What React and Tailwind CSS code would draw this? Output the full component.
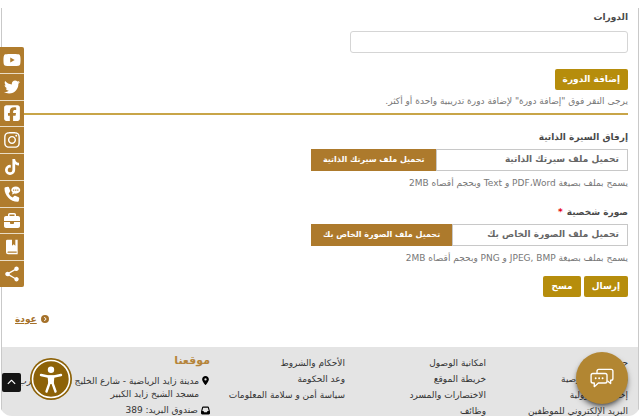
import React, { useRef, useState } from 'react';
import {
  FaYoutube, FaTwitter, FaSquareFacebook, FaInstagram, FaTiktok, FaBriefcase,
  FaLocationDot, FaInbox, FaCircleChevronRight, FaChevronUp,
} from 'react-icons/fa6';
import { MdShare } from 'react-icons/md';

function PhoneChatIcon() {
  return (
    <svg viewBox="0 0 24 24" className="size-[18px]" fill="currentColor" aria-hidden="true">
      <path d="M7.6 11.2c1.2 2.500 2.900 4.200 5.300 5.400l2-1.900c.4-.4.9-.5 1.400-.3l4.600 1.900c.6.300.9.800.8 1.400l-.6 3.300c-.1.700-.7 1.200-1.500 1.200C9.800 22 2 14.200 2 4.500c0-.8.500-1.400 1.200-1.500l3.300-.7c.6-.1 1.200.2 1.400.8l1.600 4.300c.2.500.1 1.100-.3 1.500z" />
      <path fillRule="evenodd" d="M17 2c3.300 0 6 2 6 4.800s-2.700 4.700-6 4.700c-.6 0-1.200-.1-1.700-.2L12 12.800l.8-2.900C11.700 9 11 8 11 6.800 11 4 13.700 2 17 2zm-3.500 3.900v1.600H15V5.900zm2.700 0v1.600h1.600V5.900zm2.800 0v1.600h1.500V5.900z" />
    </svg>
  );
}

function BookIcon() {
  return (
    <svg viewBox="0 0 24 24" className="size-4" fill="currentColor" aria-hidden="true">
      <path fillRule="evenodd" d="M5 1h7v9l2.500-2L17 10V1h3.500v22H6a3 3 0 0 1-3-3V3a2 2 0 0 1 2-2zm1.200 17.800a1 1 0 0 0 0 2H19v-2z" />
    </svg>
  );
}

function ChatIcon() {
  return (
    <svg viewBox="0 0 26 22" className="h-5 w-6" fill="none" stroke="currentColor" strokeWidth="1.500" strokeLinejoin="round" strokeLinecap="round" aria-hidden="true">
      <path d="M7.500 5V3.500a2 2 0 0 1 2-2H23a2 2 0 0 1 2 2v8a2 2 0 0 1-2 2h-.5V17l-3-2.500" />
      <path d="M3 6h13.500a2 2 0 0 1 2 2v6.500a2 2 0 0 1-2 2H9L4.500 20.500v-4H3a2 2 0 0 1-2-2V8a2 2 0 0 1 2-2z" />
      <path d="M6 11.300h.1M9.800 11.300h.1M13.600 11.300h.1" strokeWidth="2" />
    </svg>
  );
}

function AccessibilityIcon() {
  return (
    <svg viewBox="0 0 42 42" className="size-full" aria-hidden="true">
      <circle cx="21" cy="21" r="21" fill="#8d6208" />
      <circle cx="21" cy="21" r="18.500" fill="none" stroke="#fff" strokeWidth="1.600" />
      <circle cx="21" cy="11.800" r="3.200" fill="#fff" />
      <path d="M11 17l7 1.500h6l7-1.500M19.500 25l-3 8.500M22.500 25l3 8.500" fill="none" stroke="#fff" strokeWidth="2.400" strokeLinecap="round" strokeLinejoin="round" />
      <path d="M17.500 17.500h7l-.8 8.500h-5.400z" fill="#fff" />
    </svg>
  );
}

const socials = [
  { label: 'YouTube', icon: <FaYoutube className="size-[18px]" /> },
  { label: 'Twitter', icon: <FaTwitter className="size-4" /> },
  { label: 'Facebook', icon: <FaSquareFacebook className="size-[18px]" /> },
  { label: 'Instagram', icon: <FaInstagram className="size-[18px]" /> },
  { label: 'TikTok', icon: <FaTiktok className="size-4" /> },
  { label: 'اتصل بنا', icon: <PhoneChatIcon /> },
  { label: 'وظائف', icon: <FaBriefcase className="size-4" /> },
  { label: 'الدليل', icon: <BookIcon /> },
  { label: 'مشاركة', icon: <MdShare className="size-[18px]" /> },
];

const footerLinks = [
  ['حقوق النشر', 'سياسة الخصوصية', 'إخلاء المسؤولية', 'البريد الإلكتروني للموظفين'],
  ['امكانية الوصول', 'خريطة الموقع', 'الاختصارات والمسرد', 'وظائف'],
  ['الأحكام والشروط', 'وعد الحكومة', 'سياسة أمن و سلامة المعلومات'],
];

function FileField({ id, label, required, prompt, hint }) {
  const picker = useRef(null);
  const [fileName, setFileName] = useState('');

  return (
    <div>
      <label htmlFor={id} className="block text-[9px] leading-4 font-bold">
        {label}
        {required && <span className="ms-1 text-red-600">*</span>}
      </label>
      <div className="mt-1 flex h-[22px] w-[317px] max-w-full">
        <input
          id={id}
          type="text"
          readOnly
          value={fileName}
          placeholder={prompt}
          className="min-w-0 flex-1 border border-[#c8c8c8] px-2 text-[9px] font-bold placeholder:text-[#666] focus:outline-none"
        />
        <button
          type="button"
          onClick={() => picker.current.click()}
          className="bg-[#ad7a2c] px-3 text-[8px] font-bold whitespace-nowrap text-white"
        >
          {prompt}
        </button>
        <input
          ref={picker}
          type="file"
          aria-label={prompt}
          className="hidden"
          onChange={(e) => setFileName(e.target.files[0]?.name ?? '')}
        />
      </div>
      <p className="mt-1 text-[9px] leading-4 text-[#777]">{hint}</p>
    </div>
  );
}

export default function App() {
  return (
    <div dir="rtl" className="relative h-screen overflow-hidden rounded-b-xl bg-white pt-2 font-['DejaVu_Sans','Liberation_Sans',sans-serif] text-[#4a4a4a]">
      <div className="mx-px border-x border-[#c9c9c9]">
        <form onSubmit={(e) => e.preventDefault()} className="ps-[10px] pt-px">
          <label htmlFor="courses" className="block text-[9px] leading-4 font-bold">الدورات</label>
          <input
            id="courses"
            type="text"
            className="mt-[6px] block h-[22px] w-4/9 rounded-[3px] border border-[#d5d5d5] px-2 text-[9px] focus:outline-none"
          />
          <button type="button" className="mt-4 block h-[21px] rounded-[2px] bg-[#b68d0c] px-2 text-[9px] font-bold text-white">
            إضافة الدورة
          </button>
          <p className="mt-[3px] text-[9px] leading-4 text-[#777]">
            يرجى النقر فوق "إضافة دورة" لإضافة دورة تدريبية واحدة أو أكثر.
          </p>
          <hr className="mt-1 border-t-2 border-[#c8a548]" />

          <div className="mt-[14px] flex flex-col gap-[13px]">
            <FileField
              id="cv"
              label="إرفاق السيرة الذاتية"
              prompt="تحميل ملف سيرتك الذاتية"
              hint="يسمح بملف بصيغة PDF،Word و Text وبحجم أقصاه 2MB"
            />
            <FileField
              id="photo"
              label="صورة شخصية"
              required
              prompt="تحميل ملف الصورة الخاص بك"
              hint="يسمح بملف بصيغة JPEG, BMP و PNG وبحجم أقصاه 2MB"
            />
          </div>

          <div className="mt-[10px] flex h-[21px] gap-[3px] text-[9px] font-bold text-white">
            <button type="submit" className="rounded-[2px] bg-[#b68d0c] px-2">إرسال</button>
            <button type="reset" className="rounded-[2px] bg-[#b68d0c] px-2">مسح</button>
          </div>
        </form>

        <div className="mt-[14px] flex justify-end pe-[13px] text-[#a5712a]">
          <a href="#back" className="flex items-center gap-1 text-[9px] leading-4 font-bold">
            <FaCircleChevronRight className="size-2" />
            <span className="underline">عودة</span>
          </a>
        </div>

        <footer className="mt-5 grid grid-cols-[142fr_141fr_135fr_208fr] bg-[#e4e4e4] ps-[10px] pt-2 pb-6 text-[9px] leading-4 whitespace-nowrap text-[#333]">
          {footerLinks.map((column) => (
            <ul key={column[0]}>
              {column.map((text) => (
                <li key={text}><a href="#footer">{text}</a></li>
              ))}
            </ul>
          ))}
          <address className="not-italic">
            <h2 className="text-[11px] leading-3 font-bold text-[#b5843a]">موقعنا</h2>
            <p className="mt-2 flex gap-[2px] leading-[13px]">
              <FaLocationDot className="mt-px size-[9px] shrink-0 text-black" />
              <span>
                مدينة زايد الرياضية - شارع الخليج العربي بالقرب
                <br />
                مسجد الشيخ زايد الكبير
              </span>
            </p>
            <p className="mt-[3px] flex items-center gap-[3px] leading-[13px]">
              <FaInbox className="size-[9px] shrink-0 text-black" />
              صندوق البريد: 389
            </p>
          </address>
        </footer>
      </div>

      {/* Social rail pinned to the window edge */}
      <nav className="absolute top-[47px] left-0 flex h-60 w-6 flex-col gap-px overflow-hidden rounded-r-[2px] bg-[#e9dcc4]">
        {socials.map(({ label, icon }) => (
          <a key={label} href="#social" aria-label={label} className="flex flex-1 items-center justify-center bg-[#b07c2d] text-white">
            {icon}
          </a>
        ))}
      </nav>

      <button type="button" aria-label="إلى الأعلى" className="absolute bottom-6 left-[2px] flex size-[19px] items-center justify-center rounded-[2px] bg-[#151515] text-white">
        <FaChevronUp className="size-[9px]" />
      </button>
      <button type="button" aria-label="إمكانية الوصول" className="absolute bottom-4 left-[30px] size-[42px]">
        <AccessibilityIcon />
      </button>
      <button type="button" aria-label="محادثة" className="absolute right-3 bottom-3 flex size-[52px] items-center justify-center rounded-full bg-[#b28632] text-white shadow-md shadow-black/50">
        <ChatIcon />
      </button>
    </div>
  );
}
